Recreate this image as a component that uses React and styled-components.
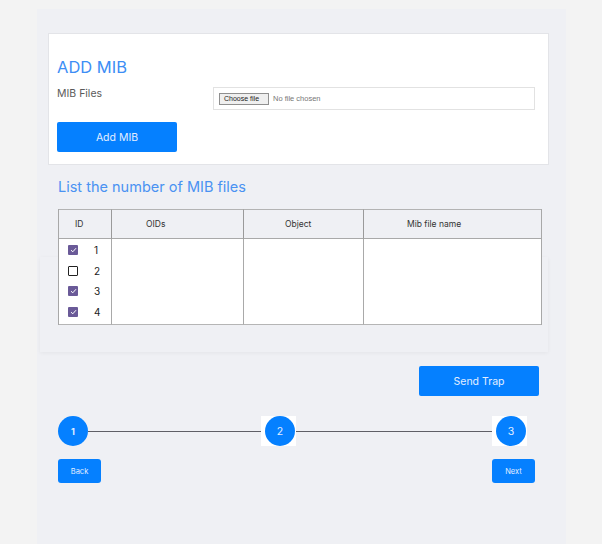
import React from 'react'
import styled, {createGlobalStyle} from 'styled-components'

const GlobalStyle = createGlobalStyle`
  body {
    margin: 0;
    background: #f3f3f3;
    font-family: Inter, "Noto Sans", sans-serif;
  }
`

const Page = styled.div`
  margin: 9px 0 0 37px;
  width: 529px;
  min-height: 535px;
  box-sizing: border-box;
  background: #eff0f4;
  padding: 24px 17px 0 11px;
`

const Card = styled.div`
  height: 132px;
  box-sizing: border-box;
  background: #fff;
  border: 1px solid #e3e4e8;
  padding: 23px 13px 0 8px;
`

const Title = styled.h2`
  margin: 0;
  font-size: 16.5px;
  line-height: 20px;
  font-weight: 400;
  color: #3d8ef5;
`

const FileRow = styled.div`
  display: flex;
  margin-top: 10px;
`

const Label = styled.div`
  width: 156px;
  font-size: 10.5px;
  line-height: 14px;
  color: #5a5a5a;
`

const FileBox = styled.div`
  flex: 1;
  height: 23px;
  box-sizing: border-box;
  border: 1.5px solid #e2e2e2;
  display: flex;
  align-items: center;
  padding-left: 5px;
  gap: 4px;
`

const FileButton = styled.span`
  width: 50px;
  height: 12px;
  box-sizing: border-box;
  border: 1px solid #8f8f8f;
  background: #efefef;
  font-family: "Liberation Sans", Arial, sans-serif;
  font-size: 7px;
  line-height: 10px;
  padding-left: 4px;
  color: #222;
`

const FileStatus = styled.span`
  font-family: "Liberation Sans", Arial, sans-serif;
  font-size: 7.5px;
  color: #777;
`

const Button = styled.button`
  display: block;
  width: ${p => p.w}px;
  height: ${p => p.h}px;
  padding: 0;
  border: none;
  border-radius: ${p => (p.h > 26 ? 2 : 3)}px;
  background: #0580ff;
  color: #e3eeff;
  font-family: Inter, "Noto Sans", sans-serif;
  font-size: ${p => (p.h > 26 ? 10.5 : 7.5)}px;
  cursor: pointer;
`

const AddButton = styled(Button)`
  margin-top: 12px;
`

const Section = styled.div`
  padding-left: 10px;
`

const SubTitle = styled.h3`
  margin: 13px 0 0;
  font-size: 14.5px;
  line-height: 18px;
  font-weight: 400;
  color: #4a92f2;
`

const TableArea = styled.div`
  position: relative;
  z-index: 0;
  margin-top: 13px;
  width: 484px;

  &::before {
    content: '';
    position: absolute;
    z-index: -1;
    left: -18px;
    top: 48px;
    width: 508px;
    height: 95px;
    background: #eff0f4;
    box-shadow: 0 1px 4px rgba(0, 0, 0, 0.05);
  }
`

const Grid = styled.div`
  display: grid;
  grid-template-columns: 53px 132px 120px 177px;
  border-left: 1px solid #a8a8a8;
  border-right: 1px solid #a8a8a8;
`

const HeadCell = styled.div`
  height: 28px;
  background: #eff0f4;
  border-top: 1px solid #b3b3b3;
  border-bottom: 1.5px solid #a9a9a9;
  border-right: ${p => (p.last ? 'none' : '1.5px solid #9a9a9a')};
  padding-left: ${p => p.pad}px;
  font-size: 8.5px;
  line-height: 28px;
  color: #333;
`

const BodyCell = styled.div`
  height: 85px;
  background: #fff;
  border-bottom: 1.5px solid #b5b5b5;
  border-right: ${p => (p.last ? 'none' : '1px solid #a9a9a9')};
`

const IdList = styled.div`
  padding-top: 1px;
`

const IdRow = styled.div`
  display: flex;
  align-items: center;
  height: 20.5px;
  padding-left: 9px;
`

const Check = styled.span`
  width: 10px;
  height: 10px;
  box-sizing: border-box;
  border-radius: 1px;
  background: ${p => (p.on ? '#6a5a98' : '#fff')};
  border: ${p => (p.on ? 'none' : '1.5px solid #222')};
  display: flex;
  align-items: center;
  justify-content: center;
`

const IdNum = styled.span`
  margin-left: 16px;
  font-size: 10px;
  color: #222;
`

const TrapRow = styled.div`
  display: flex;
  justify-content: flex-end;
  width: 481px;
  margin-top: 41px;
`

const Stepper = styled.div`
  display: flex;
  align-items: center;
  margin-top: 20px;
  height: 30px;
`

const StepBox = styled.div`
  background: ${p => (p.boxed ? '#fff' : 'transparent')};
  height: 30px;
  padding: ${p => (p.boxed ? '0 1px 0 4px' : '0')};
  display: flex;
  align-items: center;
`

const Circle = styled.div`
  width: 30px;
  height: 30px;
  border-radius: 50%;
  background: #0580ff;
  color: #e3eeff;
  font-size: ${p => (p.bold ? 9 : 10.5)}px;
  font-weight: ${p => (p.bold ? 700 : 400)};
  display: flex;
  align-items: center;
  justify-content: center;
`

const Line = styled.div`
  width: ${p => p.w}px;
  height: 1px;
  background: #5f5f66;
`

const NavRow = styled.div`
  display: flex;
  justify-content: space-between;
  width: 477px;
  margin-top: 13px;
`

const columns = [
  {name: 'ID', pad: 16},
  {name: 'OIDs', pad: 34},
  {name: 'Object', pad: 41},
  {name: 'Mib file name', pad: 43}
]

const ids = [
  {n: 1, on: true},
  {n: 2, on: false},
  {n: 3, on: true},
  {n: 4, on: true}
]

const Tick = () => (
  <svg width="7" height="6" viewBox="0 0 7 6">
    <path d="M1 3.2 L2.8 4.8 L6 1.2" stroke="#fff" strokeWidth="1" fill="none" />
  </svg>
)

const App = () => {
  return (
    <Page>
      <GlobalStyle />
      <Card>
        <Title>ADD MIB</Title>
        <FileRow>
          <Label>MIB Files</Label>
          <FileBox>
            <FileButton>Choose file</FileButton>
            <FileStatus>No file chosen</FileStatus>
          </FileBox>
        </FileRow>
        <AddButton w={120} h={30}>Add MIB</AddButton>
      </Card>
      <Section>
        <SubTitle>List the number of MIB files</SubTitle>
        <TableArea>
          <Grid>
            {columns.map((c, i) => (
              <HeadCell key={c.name} pad={c.pad} last={i === columns.length - 1}>{c.name}</HeadCell>
            ))}
            <BodyCell>
              <IdList>
                {ids.map(r => (
                  <IdRow key={r.n}>
                    <Check on={r.on}>{r.on && <Tick />}</Check>
                    <IdNum>{r.n}</IdNum>
                  </IdRow>
                ))}
              </IdList>
            </BodyCell>
            <BodyCell />
            <BodyCell />
            <BodyCell last />
          </Grid>
        </TableArea>
        <TrapRow>
          <Button w={120} h={30}>Send Trap</Button>
        </TrapRow>
        <Stepper>
          <StepBox><Circle bold>1</Circle></StepBox>
          <Line w={173} />
          <StepBox boxed><Circle>2</Circle></StepBox>
          <Line w={196} />
          <StepBox boxed><Circle>3</Circle></StepBox>
        </Stepper>
        <NavRow>
          <Button w={43} h={24}>Back</Button>
          <Button w={43} h={24}>Next</Button>
        </NavRow>
      </Section>
    </Page>
  )
}

export default App
